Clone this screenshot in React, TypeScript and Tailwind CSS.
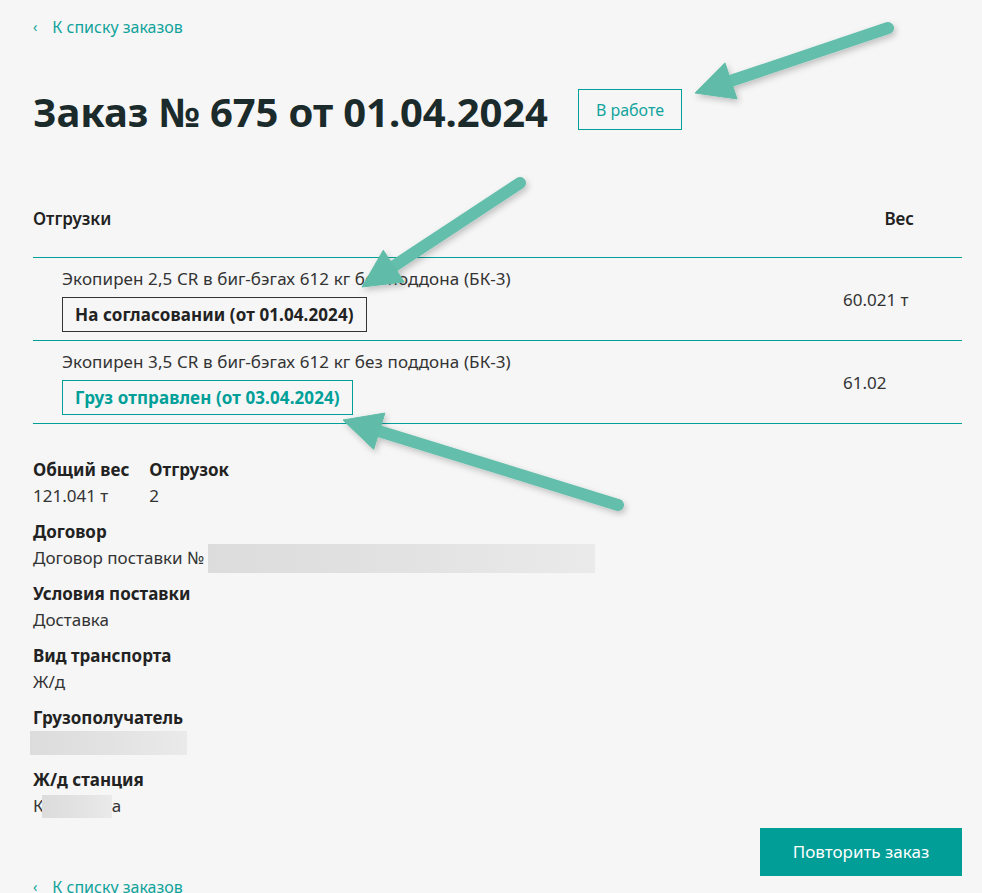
import React from 'react';

type Arrow = { x1: number; y1: number; x2: number; y2: number };

// annotation arrows drawn over the page
const arrows: Arrow[] = [
  { x1: 888, y1: 28, x2: 695, y2: 93 },
  { x1: 520, y1: 183, x2: 362, y2: 287 },
  { x1: 618, y1: 505, x2: 343, y2: 420 },
];

const ArrowShape: React.FC<Arrow> = ({ x1, y1, x2, y2 }) => {
  const dx = x2 - x1;
  const dy = y2 - y1;
  const len = Math.hypot(dx, dy);
  const ux = dx / len;
  const uy = dy / len;
  const head = 38;
  const half = 19;
  const bx = x2 - ux * head;
  const by = y2 - uy * head;
  const px = -uy * half;
  const py = ux * half;
  const pts = `${x2},${y2} ${bx + px},${by + py} ${bx - px},${by - py}`;
  return (
    <g filter="url(#shadow)">
      <line x1={x1} y1={y1} x2={bx + ux * 6} y2={by + uy * 6} stroke="#63bfab" strokeWidth={12} strokeLinecap="round" />
      <polygon points={pts} fill="#60bca8" stroke="#60bca8" strokeWidth={1} strokeLinejoin="round" />
    </g>
  );
};

const rows = [
  {
    name: 'Экопирен 2,5 CR в биг-бэгах 612 кг без поддона (БК-3)',
    status: 'На согласовании (от 01.04.2024)',
    weight: '60.021 т',
    teal: false,
  },
  {
    name: 'Экопирен 3,5 CR в биг-бэгах 612 кг без поддона (БК-3)',
    status: 'Груз отправлен (от 03.04.2024)',
    weight: '61.02',
    teal: true,
  },
];

const Blur: React.FC<{ className: string }> = ({ className }) => (
  <span className={`inline-block shrink-0 bg-gradient-to-r from-[#dcdcdc] via-[#e2e2e2] to-[#eaeaea] ${className}`} />
);

const BackLink: React.FC<{ className?: string }> = ({ className = '' }) => (
  <a className={`flex items-center gap-[15px] text-[16px] text-[#0fa39b] ${className}`}>
    <span className="text-[14px]">‹</span>
    <span>К списку заказов</span>
  </a>
);

const App: React.FC = () => {
  return (
    <div className="relative h-[893px] overflow-hidden bg-[#f6f6f6] text-[#222] font-['Noto_Sans',sans-serif]">
      <div className="pl-[33px] pr-[20px]">
        <BackLink className="pt-[15px] leading-[24px]" />

        <div className="flex items-center mt-[49px]">
          <h1 className="text-[40px] font-bold leading-[48px] text-[#1b2a2a] tracking-[-0.1px]">Заказ № 675 от 01.04.2024</h1>
          <span className="ml-[30px] mb-[5px] border border-[#009f98] px-[17px] h-[41px] flex items-center text-[16px] text-[#12a59d]">
            В работе
          </span>
        </div>

        <div className="flex justify-between mt-[71px] pr-[48px] text-[17px] font-semibold leading-[24px]">
          <span>Отгрузки</span>
          <span>Вес</span>
        </div>

        <div className="mt-[26px] border-t border-[#00a099]">
          {rows.map((r) => (
            <div key={r.name} className="flex items-center border-b border-[#00a099] h-[83px]">
              <div className="flex-1 pl-[29px]">
                <div className="text-[17px] leading-[24px] text-[#333] tracking-[0.1px]">{r.name}</div>
                <div
                  className={`inline-block mt-[6px] border px-[12px] h-[35px] leading-[33px] text-[17px] font-bold tracking-[0.1px] ${
                    r.teal ? 'border-[#00a099] text-[#00a099]' : 'border-[#333] text-[#222]'
                  }`}
                >
                  {r.status}
                </div>
              </div>
              <div className="w-[119px] text-[17px] text-[#333] pt-[1px]">{r.weight}</div>
            </div>
          ))}
        </div>

        <div className="mt-[33px] text-[17px] leading-[26px]">
          <div className="flex gap-[20px]">
            <div>
              <div className="font-bold">Общий вес</div>
              <div className="text-[#333]">121.041 т</div>
            </div>
            <div>
              <div className="font-bold">Отгрузок</div>
              <div className="text-[#333]">2</div>
            </div>
          </div>

          <div className="mt-[10px] font-bold">Договор</div>
          <div className="flex items-center h-[26px] text-[#333]">
            Договор поставки №
            <Blur className="ml-[4px] w-[387px] h-[29px]" />
          </div>

          <div className="mt-[10px] font-bold">Условия поставки</div>
          <div className="text-[#333]">Доставка</div>

          <div className="mt-[10px] font-bold">Вид транспорта</div>
          <div className="text-[#333]">Ж/д</div>

          <div className="mt-[10px] font-bold">Грузополучатель</div>
          <div className="h-[26px] flex items-start -ml-[3px]">
            <Blur className="w-[157px] h-[24px]" />
          </div>

          <div className="mt-[10px] font-bold">Ж/д станция</div>
          <div className="flex items-center h-[26px] text-[#333]">
            К<Blur className="w-[70px] h-[23px] -ml-[2px]" />а
          </div>
        </div>

        <div className="flex justify-end mt-[9px]">
          <button className="w-[202px] h-[48px] bg-[#009e97] text-white text-[17px]">Повторить заказ</button>
        </div>

        <BackLink className="leading-[22px]" />
      </div>

      <svg className="absolute inset-0 pointer-events-none" width="982" height="893">
        <defs>
          <filter id="shadow" x="-20%" y="-20%" width="140%" height="140%">
            <feDropShadow dx="2" dy="3" stdDeviation="3" floodColor="#000" floodOpacity="0.22" />
          </filter>
        </defs>
        {arrows.map((a, i) => (
          <ArrowShape key={i} {...a} />
        ))}
      </svg>
    </div>
  );
};

export default App;
